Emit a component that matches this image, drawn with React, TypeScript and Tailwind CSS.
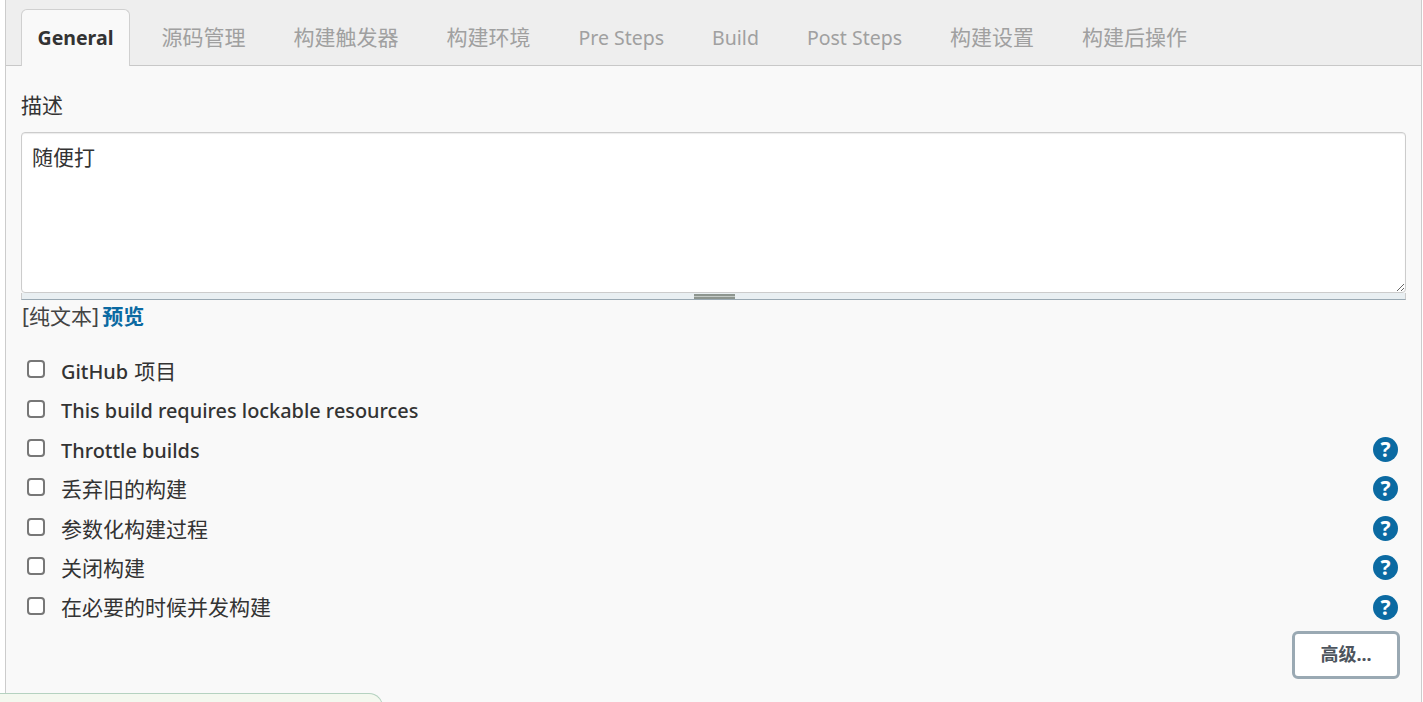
import React from "react";

const FONT = "font-['Noto_Sans','Noto_Sans_CJK_SC',sans-serif]";

const tabs = [
  { label: "源码管理", latin: false },
  { label: "构建触发器", latin: false },
  { label: "构建环境", latin: false },
  { label: "Pre Steps", latin: true },
  { label: "Build", latin: true },
  { label: "Post Steps", latin: true },
  { label: "构建设置", latin: false },
  { label: "构建后操作", latin: false },
];

const options = [
  { label: "GitHub", suffix: "项目", help: false, latin: true },
  { label: "This build requires lockable resources", help: false, latin: true },
  { label: "Throttle builds", help: true, latin: true },
  { label: "丢弃旧的构建", help: true, latin: false },
  { label: "参数化构建过程", help: true, latin: false },
  { label: "关闭构建", help: true, latin: false },
  { label: "在必要的时候并发构建", help: true, latin: false },
];

function HelpIcon() {
  return (
    <span className="mb-[2px] flex h-[25px] w-[25px] items-center justify-center rounded-full bg-[#0b6aa2] text-[21px] font-bold leading-none text-white">
      ?
    </span>
  );
}

export default function App() {
  return (
    <div className={`${FONT} relative h-[702px] w-[1423px] overflow-hidden bg-white text-[21px] text-[#333]`}>
      <div className="ml-[5px] mr-[1px] h-full border-x border-[#ccc] bg-[#f9f9f9]">
        <div className="flex h-[66px] items-end border-b border-[#c8c8c8] bg-[#eeeeee] pl-[15px]">
          <div className="-mb-px mr-[7.5px] flex h-[57px] w-[109px] items-center justify-center rounded-t-[6px] border border-b-0 border-[#d0d0d0] bg-[#f9f9f9] text-[19.5px] font-bold text-[#333]">
            General
          </div>
          {tabs.map((tab) => (
            <div
              key={tab.label}
              className={`flex h-[56px] items-center px-[24px] pt-[2px] text-[#a0a0a0] ${tab.latin ? "text-[19.5px]" : ""}`}
            >
              {tab.label}
            </div>
          ))}
        </div>

        <div className="px-[15px]">
          <div className="mt-[25px] h-[29px] leading-[29px]">描述</div>
          <textarea
            defaultValue="随便打"
            className="mt-[12px] block h-[161px] w-[1385px] rounded-[4px] border border-[#ccc] bg-white px-[10px] py-[8px] text-[21px] leading-[32px] text-[#333] shadow-[inset_0_1px_1px_rgba(0,0,0,0.08)] outline-none"
          />
          <div className="flex h-[7px] w-[1385px] items-center justify-center border-x border-b border-x-[#ccc] border-b-[#9aa9b3] bg-[#e9eff2]">
            <div className="ml-[1px] h-[5px] w-[41px] border-y-2 border-[#8d958f] bg-[#c4cac6]" />
          </div>
          <div className="h-[32px] leading-[32px] text-[#444]">
            <span className="ml-[1px] mr-[-2px]">[纯文本]</span> <a className="font-bold text-[#0b6aa2]">预览</a>
          </div>

          <div className="mt-[20px] w-[1377px]">
            {options.map((opt) => (
              <div key={opt.label} className="flex h-[39.4px] items-center justify-between">
                <label className="flex items-center">
                  <input
                    type="checkbox"
                    className="mb-[5px] ml-[6px] h-[18px] w-[18px] appearance-none rounded-[4px] border-2 border-[#777] bg-white"
                  />
                  <span className={`ml-[16px] ${opt.latin ? "text-[19.9px] font-medium" : ""}`}>
                    {opt.label}
                    {opt.suffix && <span className="ml-[6px] text-[21px] font-normal">{opt.suffix}</span>}
                  </span>
                </label>
                {opt.help && <HelpIcon />}
              </div>
            ))}
          </div>

          <div className="mt-[3px] flex w-[1379px] justify-end">
            <button className="h-[48px] w-[108px] rounded-[6px] border-[3px] border-[#9aa9b3] bg-white text-[18px] font-bold text-[#4d545d]">
              高级...
            </button>
          </div>
        </div>
      </div>

      {/* notice sliding in from the bottom left corner */}
      <div className="absolute left-0 top-[693px] h-[20px] w-[383px] rounded-tr-[14px] border-r border-t border-[#b5d2c0] bg-[#f4f8ef]" />
    </div>
  );
}
